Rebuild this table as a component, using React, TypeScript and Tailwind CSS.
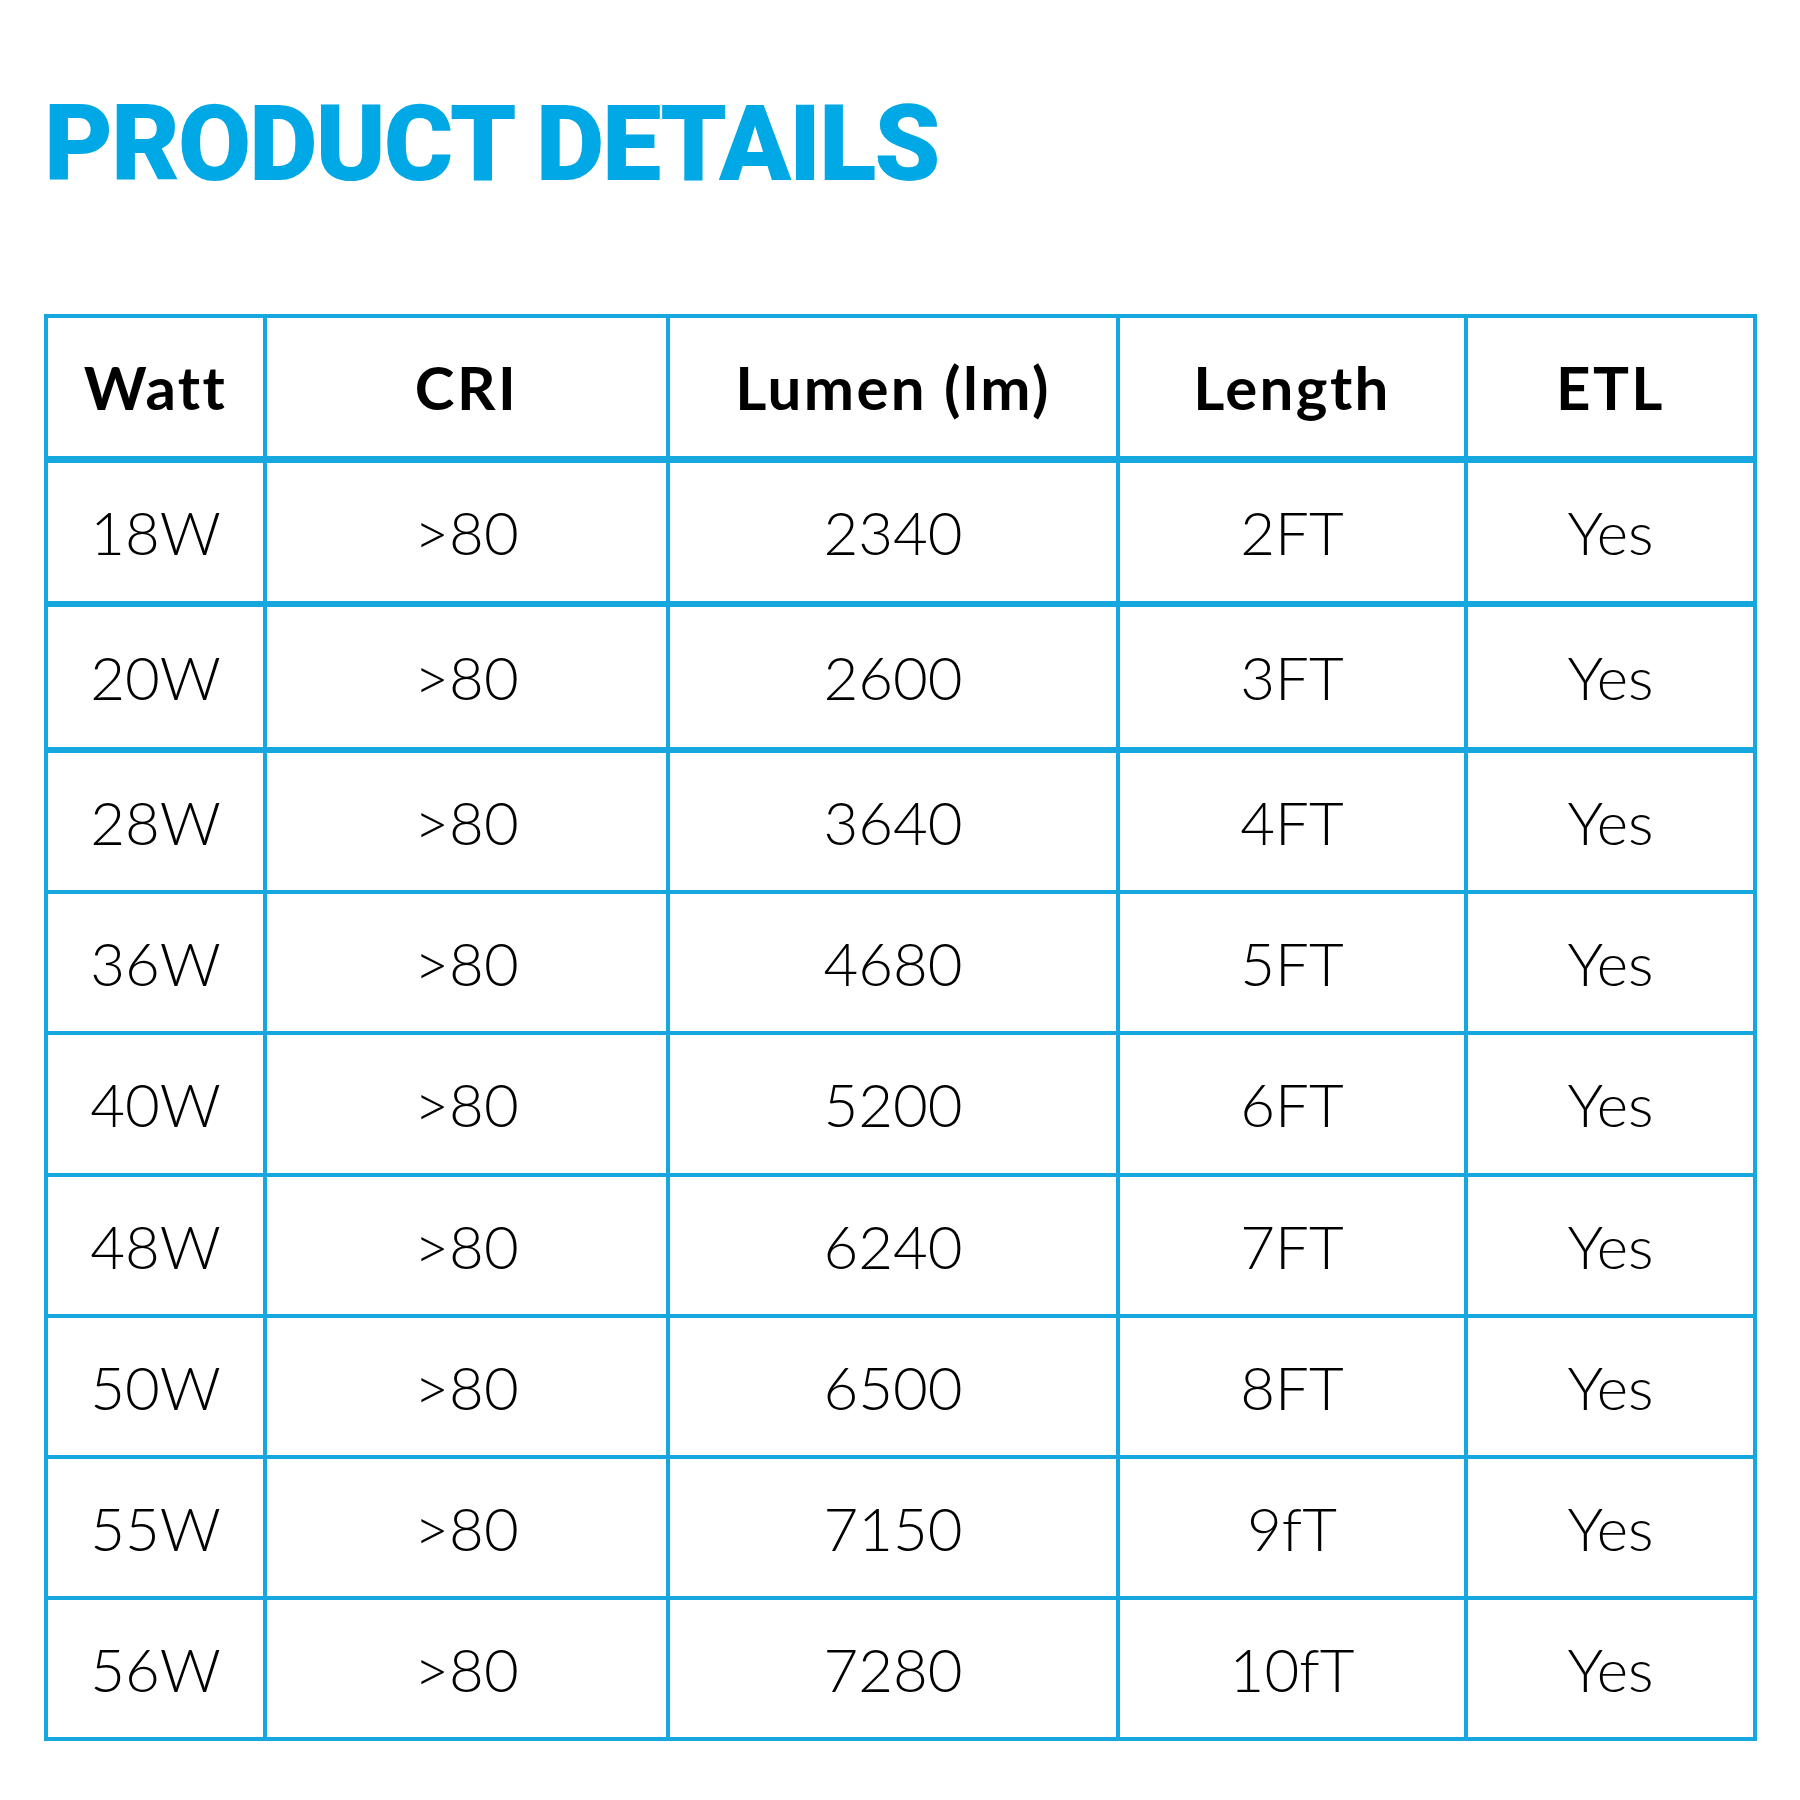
import React from "react";

const rows: [string, string, string, string, string][] = [
  ["18W", ">80", "2340", "2FT", "Yes"],
  ["20W", ">80", "2600", "3FT", "Yes"],
  ["28W", ">80", "3640", "4FT", "Yes"],
  ["36W", ">80", "4680", "5FT", "Yes"],
  ["40W", ">80", "5200", "6FT", "Yes"],
  ["48W", ">80", "6240", "7FT", "Yes"],
  ["50W", ">80", "6500", "8FT", "Yes"],
  ["55W", ">80", "7150", "9fT", "Yes"],
  ["56W", ">80", "7280", "10fT", "Yes"],
];

const headers = ["Watt", "CRI", "Lumen (lm)", "Length", "ETL"];
const widths = ["w-[219px]", "w-[403px]", "w-[450px]", "w-[348px]", "w-[289px]"];

const rowClass = [
  "h-[145px]",
  "h-[146px]",
  "h-[142px]",
  "h-[141px]",
  "h-[142px]",
  "h-[141px]",
  "h-[141px]",
  "h-[141px]",
  "h-[141px]",
];

const cellBorder = [
  "border-[4px] border-b-[6px]",
  "border-[4px] border-b-[6px]",
  "border-[4px]",
  "border-[4px]",
  "border-[4px]",
  "border-[4px]",
  "border-[4px]",
  "border-[4px]",
  "border-[4px]",
];

export default function App() {
  return (
    <div className="w-[1800px] h-[1800px] bg-white relative">
      <div className="pt-[84px] pl-[44px]">
        <h1
          className="text-[106px] leading-[120px] font-black text-[#00a8e6] tracking-[-0.02em]"
          style={{ fontFamily: "Roboto, 'Liberation Sans', sans-serif" }}
        >
          PRODUCT DETAILS
        </h1>
      </div>
      <div className="pl-[44px] pt-[110px]">
        <table
          className="border-collapse table-fixed"
          style={{ fontFamily: "Lato, 'Noto Sans', sans-serif" }}
        >
          <colgroup>
            {widths.map((w, i) => (
              <col key={i} className={w} />
            ))}
          </colgroup>
          <thead>
            <tr className="h-[143px]">
              {headers.map((h, i) => (
                <th
                  key={i}
                  className="border-[4px] border-b-[7px] border-[#17a7df] text-center align-middle text-[60px] font-bold tracking-[0.04em] text-black p-0"
                >
                  {h}
                </th>
              ))}
            </tr>
          </thead>
          <tbody>
            {rows.map((r, ri) => (
              <tr key={ri} className={rowClass[ri]}>
                {r.map((c, ci) => (
                  <td
                    key={ci}
                    className={`${cellBorder[ri]} border-[#17a7df] text-center align-middle text-[60px] font-light text-black p-0`}
                  >
                    {c}
                  </td>
                ))}
              </tr>
            ))}
          </tbody>
        </table>
      </div>
    </div>
  );
}
